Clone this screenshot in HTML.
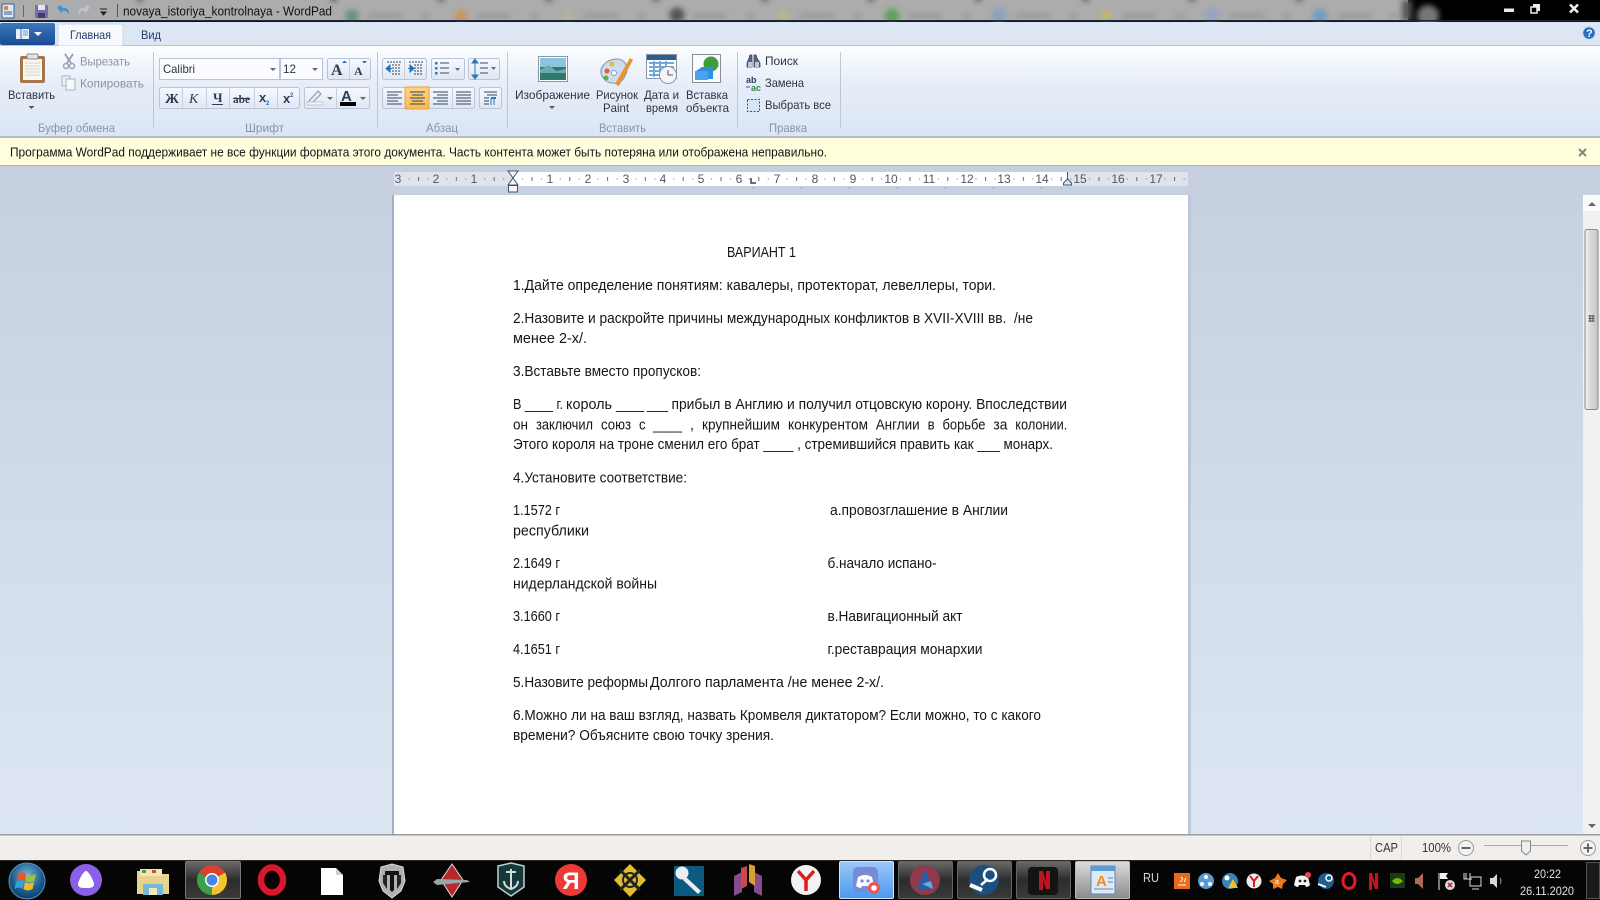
<!DOCTYPE html>
<html lang="ru"><head><meta charset="utf-8"><title>novaya_istoriya_kontrolnaya - WordPad</title>
<style>
html,body{margin:0;padding:0;background:#000;width:1600px;height:900px;overflow:hidden}
svg{display:block;font-family:"Liberation Sans","Noto Sans CJK JP",sans-serif}
.d{font-size:14.6px;fill:#141414}
.u{font-size:12px;fill:#2c3440}
.g{font-size:12px;fill:#8a93a3}
.l{font-size:12px;fill:#8794a8}
.r{font-size:12px;fill:#556}
</style></head><body>
<svg width="1600" height="900" viewBox="0 0 1600 900" xmlns="http://www.w3.org/2000/svg">
<defs>
<linearGradient id="rib" x1="0" y1="0" x2="0" y2="1"><stop offset="0" stop-color="#fbfdff"/><stop offset=".45" stop-color="#e6edf8"/><stop offset="1" stop-color="#dbe5f3"/></linearGradient>
<linearGradient id="work" x1="0" y1="0" x2="0" y2="1"><stop offset="0" stop-color="#c5cfe0"/><stop offset="1" stop-color="#dde6f2"/></linearGradient>
<linearGradient id="app" x1="0" y1="0" x2="0" y2="1"><stop offset="0" stop-color="#3a77bd"/><stop offset="1" stop-color="#1a4b94"/></linearGradient>
<linearGradient id="btn" x1="0" y1="0" x2="0" y2="1"><stop offset="0" stop-color="#f6f9fe"/><stop offset="1" stop-color="#dfe7f3"/></linearGradient>
<linearGradient id="org" x1="0" y1="0" x2="0" y2="1"><stop offset="0" stop-color="#fdd58a"/><stop offset="1" stop-color="#fbb84e"/></linearGradient>
<linearGradient id="thumb" x1="0" y1="0" x2="1" y2="0"><stop offset="0" stop-color="#f2f2f2"/><stop offset=".5" stop-color="#d6d6d6"/><stop offset="1" stop-color="#c4c4c4"/></linearGradient>
<linearGradient id="tb" x1="0" y1="0" x2="0" y2="1"><stop offset="0" stop-color="#6a6a6a"/><stop offset=".5" stop-color="#2c2c2c"/><stop offset="1" stop-color="#3a3a3a"/></linearGradient>
<linearGradient id="disc" x1="0" y1="0" x2="0" y2="1"><stop offset="0" stop-color="#9cc8f8"/><stop offset="1" stop-color="#4c98ee"/></linearGradient>
<linearGradient id="wp" x1="0" y1="0" x2="0" y2="1"><stop offset="0" stop-color="#dcdcdc"/><stop offset="1" stop-color="#8a8a8a"/></linearGradient>
<radialGradient id="orb" cx=".5" cy=".35" r=".7"><stop offset="0" stop-color="#7fb4d8"/><stop offset=".6" stop-color="#1d5d8e"/><stop offset="1" stop-color="#0a3a5c"/></radialGradient>
<filter id="bl" x="-50%" y="-50%" width="200%" height="200%"><feGaussianBlur stdDeviation="3"/></filter>
<filter id="s" x="-5%" y="-5%" width="110%" height="110%"><feGaussianBlur stdDeviation=".25"/></filter>
<pattern id="tick" x="513" y="172" width="37.8" height="14" patternUnits="userSpaceOnUse">
<rect x="9" y="6.5" width="1" height="1" fill="#667"/><rect x="18.5" y="5" width="1" height="4" fill="#667"/><rect x="28" y="6.5" width="1" height="1" fill="#667"/>
</pattern>
</defs>

<!-- title bar -->
<rect width="1600" height="22" fill="#000"/>
<rect x="0" y="0" width="1408" height="21" fill="#acacac"/>
<rect x="1402" y="0" width="10" height="21" fill="#555" filter="url(#bl)"/>
<g filter="url(#bl)" opacity=".72">
<circle cx="140" cy="-2" r="3.500" fill="#333"/><circle cx="334" cy="-2" r="3.500" fill="#333"/><circle cx="441" cy="-2" r="3.500" fill="#333"/><circle cx="549" cy="-2" r="3.500" fill="#333"/><circle cx="656" cy="-2" r="3.500" fill="#333"/><circle cx="765" cy="-2" r="3.500" fill="#333"/><circle cx="871" cy="-2" r="3.500" fill="#333"/><circle cx="978" cy="-2" r="3.500" fill="#333"/><circle cx="1086" cy="-2" r="3.500" fill="#333"/><circle cx="1192" cy="-2" r="3.500" fill="#333"/><circle cx="1299" cy="-2" r="3.500" fill="#333"/>
<circle cx="352" cy="16" r="6.500" fill="#3f8a62"/><circle cx="461" cy="16" r="6.500" fill="#d58a3e"/><circle cx="568" cy="16" r="5" fill="#b9b88a"/><circle cx="677" cy="15" r="7.500" fill="#303030"/><circle cx="783" cy="16" r="5" fill="#c6bc62"/><circle cx="892" cy="16" r="7.500" fill="#3f9a3a"/><circle cx="999" cy="16" r="7.500" fill="#7f9cc8"/><circle cx="1106" cy="16" r="5" fill="#d0be40"/><circle cx="1212" cy="16" r="7.500" fill="#8aa2c8"/><circle cx="1320" cy="16" r="7.500" fill="#5c94c8"/>
<g fill="#8c8c8c"><rect x="368" y="14" width="34" height="4"/><rect x="422" y="14" width="8" height="4"/><rect x="477" y="14" width="34" height="4"/><rect x="530" y="14" width="8" height="4"/><rect x="584" y="14" width="34" height="4"/><rect x="638" y="14" width="8" height="4"/><rect x="693" y="14" width="34" height="4"/><rect x="746" y="14" width="8" height="4"/><rect x="800" y="14" width="34" height="4"/><rect x="854" y="14" width="8" height="4"/><rect x="908" y="14" width="34" height="4"/><rect x="962" y="14" width="8" height="4"/><rect x="1016" y="14" width="34" height="4"/><rect x="1070" y="14" width="8" height="4"/><rect x="1122" y="14" width="34" height="4"/><rect x="1176" y="14" width="8" height="4"/><rect x="1230" y="14" width="34" height="4"/><rect x="1282" y="14" width="8" height="4"/><rect x="1338" y="14" width="34" height="4"/><rect x="1390" y="14" width="8" height="4"/></g>
</g>
<circle cx="1428" cy="16" r="11" fill="#777" filter="url(#bl)"/>
<rect y="20" width="1600" height="1.500" fill="#1f2a38"/>
<!-- qat -->
<g>
<rect x="2" y="4" width="12" height="14" fill="#dce8f5" stroke="#34609a"/><rect x="4" y="6" width="4" height="4" fill="#e2853a"/><path d="M4 12h8M4 14h8" stroke="#34609a"/>
<rect x="23" y="5" width="1" height="12" fill="#666"/>
<rect x="35" y="5" width="13" height="13" fill="#7c6da8" rx="1"/><rect x="38" y="5" width="7" height="5" fill="#e6e4f0"/><rect x="38" y="13" width="7" height="5" fill="#453a70"/>
<path d="M57 7 L62 5 L62 8 C68 7 70 11 68 15 C68 11 65 10 62 11 L62 14Z" fill="#3f93d6"/>
<path d="M90 7 L85 5 L85 8 C79 7 77 11 79 15 C79 11 82 10 85 11 L85 14Z" fill="#b9c4d4"/>
<path d="M100 9h7M101 12h5l-2.500 3z" stroke="#222" fill="#222"/>
<rect x="117" y="4" width="1" height="13" fill="#555"/>
</g>
<text x="123" y="15.500" font-size="12.500" fill="#111" textLength="209" lengthAdjust="spacingAndGlyphs">novaya_istoriya_kontrolnaya - WordPad</text>
<!-- window buttons -->
<rect x="1504" y="8.500" width="10" height="3.500" fill="#e8e8e8"/>
<rect x="1533" y="4" width="7" height="7" fill="#eee"/><rect x="1531" y="7" width="6" height="6" fill="#000" stroke="#eee" stroke-width="1.500"/>
<path d="M1570 4.500l8 8M1578 4.500l-8 8" stroke="#eee" stroke-width="2.600"/>

<!-- tab row -->
<rect y="22" width="1600" height="24" fill="#dde6f3"/>
<rect x="0" y="23" width="55" height="22" rx="2" fill="url(#app)"/>
<rect x="16" y="29" width="13" height="10" fill="#e8eefa"/><path d="M21 29v10" stroke="#3a6fb4"/><path d="M23 31h5M23 33h5M23 35h5" stroke="#7a99c5"/>
<path d="M34 32h8l-4 4z" fill="#fff"/>
<path d="M58 46V26q0-2 2-2h61q2 0 2 2v20z" fill="#f6f9fe" stroke="#cfd7e4"/>
<text x="70" y="39" class="u" textLength="41" lengthAdjust="spacingAndGlyphs" style="fill:#1f3a66">Главная</text>
<text x="141" y="39" class="u" textLength="20" lengthAdjust="spacingAndGlyphs" style="fill:#1f3a66">Вид</text>
<circle cx="1589" cy="33" r="6.500" fill="#2a6cc0" stroke="#cfe0f5" stroke-width="1.500"/><text x="1586" y="37" font-size="11" font-weight="bold" fill="#fff">?</text>

<!-- ribbon -->
<rect y="46" width="1600" height="90" fill="url(#rib)"/>
<rect y="45" width="58" height="1" fill="#b8c2d0"/><rect x="123" y="45" width="1477" height="1" fill="#b8c2d0"/>
<rect y="136" width="1600" height="2" fill="#b3bdd0"/>
<g fill="#bcc7d6"><rect x="153" y="52" width="1" height="76"/><rect x="377" y="52" width="1" height="76"/><rect x="507" y="52" width="1" height="76"/><rect x="737" y="52" width="1" height="76"/><rect x="840" y="52" width="1" height="76"/></g>

<!-- clipboard group -->
<rect x="20" y="56" width="25" height="27" rx="2" fill="#a5764a"/><rect x="23" y="59" width="19" height="21" fill="#fbf7ea"/><path d="M25 63h15M25 66h15M25 69h15M25 72h15M25 75h15" stroke="#cfd4dc"/><rect x="27" y="54" width="11" height="5" rx="1" fill="#dfe3e8" stroke="#889"/>
<text x="8" y="99" class="u" textLength="47" lengthAdjust="spacingAndGlyphs">Вставить</text>
<path d="M28.500 106h6l-3 3z" fill="#556"/>
<path d="M65 54l6 9M73 54l-6 9" stroke="#98a2b0" stroke-width="2" fill="none"/><circle cx="66" cy="66" r="2.500" fill="none" stroke="#98a2b0" stroke-width="1.500"/><circle cx="72" cy="66" r="2.500" fill="none" stroke="#98a2b0" stroke-width="1.500"/>
<text x="80" y="65.500" class="g" textLength="50" lengthAdjust="spacingAndGlyphs">Вырезать</text>
<rect x="62" y="76" width="8" height="10" fill="#eef2f7" stroke="#aab3c0"/><rect x="66" y="79" width="9" height="11" fill="#f5f7fa" stroke="#aab3c0"/>
<text x="80" y="87.500" class="g" textLength="64" lengthAdjust="spacingAndGlyphs">Копировать</text>
<text x="38" y="132" class="l" textLength="77" lengthAdjust="spacingAndGlyphs">Буфер обмена</text>

<!-- font group -->
<rect x="159.500" y="58.500" width="120" height="21" fill="#fafcff" stroke="#b9c4d4"/>
<rect x="280.500" y="58.500" width="42" height="21" fill="#fafcff" stroke="#b9c4d4"/>
<text x="163" y="73" class="u" textLength="32" lengthAdjust="spacingAndGlyphs">Calibri</text>
<text x="283" y="73" class="u" textLength="13" lengthAdjust="spacingAndGlyphs">12</text>
<path d="M270 68h6l-3 3zM312 68h6l-3 3z" fill="#667"/>
<rect x="327.500" y="58.500" width="43" height="21" rx="2" fill="url(#btn)" stroke="#b9c4d4"/><rect x="349" y="59" width="1" height="20" fill="#c6cfdc"/>
<text x="331" y="75" font-family="Liberation Serif" font-weight="bold" font-size="16" fill="#2e3c50">A</text><path d="M342 63l2.500-2.500 2.500 2.500z" fill="#2a66b0"/>
<text x="354" y="75" font-family="Liberation Serif" font-weight="bold" font-size="12" fill="#2e3c50">A</text><path d="M362 61h5l-2.500 2.500z" fill="#2a66b0"/>
<rect x="159.500" y="87.500" width="140" height="21" rx="2" fill="url(#btn)" stroke="#b9c4d4"/>
<g fill="#c6cfdc"><rect x="182" y="88" width="1" height="20"/><rect x="206" y="88" width="1" height="20"/><rect x="229" y="88" width="1" height="20"/><rect x="254" y="88" width="1" height="20"/><rect x="277" y="88" width="1" height="20"/></g>
<text x="165" y="103" font-family="Liberation Serif" font-weight="bold" font-size="14" fill="#2e3c50">Ж</text>
<text x="189" y="103" font-family="Liberation Serif" font-style="italic" font-size="14" fill="#2e3c50">К</text>
<text x="213" y="102" font-family="Liberation Serif" font-size="13" font-weight="bold" fill="#2e3c50">Ч</text><rect x="212" y="104" width="11" height="1" fill="#2e3c50"/>
<text x="233" y="103" font-family="Liberation Serif" font-size="12" font-weight="bold" fill="#2e3c50" textLength="17" lengthAdjust="spacingAndGlyphs">abe</text><rect x="233" y="98" width="17" height="1" fill="#2e3c50"/>
<text x="259" y="102" font-size="13" font-weight="bold" fill="#2e3c50">x</text><text x="266" y="105" font-size="6" font-weight="bold" fill="#2a66b0">2</text>
<text x="283" y="103" font-size="13" font-weight="bold" fill="#2e3c50">x</text><text x="290" y="97" font-size="6" font-weight="bold" fill="#2a66b0">2</text>
<rect x="304.500" y="87.500" width="65" height="21" rx="2" fill="url(#btn)" stroke="#b9c4d4"/><rect x="336" y="88" width="1" height="20" fill="#c6cfdc"/>
<path d="M309 101l9-10 3 3-9 9h-3z" fill="#e6ecf4" stroke="#8b95a5"/><rect x="307" y="102" width="16" height="3" fill="#f2f4f7" stroke="#b0b8c4" stroke-width=".7"/>
<path d="M327 97h6l-3 3zM360 97h6l-3 3z" fill="#667"/>
<text x="341" y="101" font-family="Liberation Sans" font-weight="bold" font-size="15" fill="#28405f">A</text><rect x="340" y="102" width="16" height="4" fill="#000"/>
<text x="245" y="132" class="l" textLength="39" lengthAdjust="spacingAndGlyphs">Шрифт</text>

<!-- paragraph group -->
<rect x="382.500" y="58.500" width="44" height="21" rx="2" fill="url(#btn)" stroke="#b9c4d4"/><rect x="404" y="59" width="1" height="20" fill="#c6cfdc"/>
<path d="M392 65h9M392 68h9M392 71h9M392 74h9M387 62h14" stroke="#30465f" stroke-dasharray="2 1"/><path d="M387 68.500h5M386 68.500l4-3.500v7z" fill="#1f74c0" stroke="#1f74c0"/>
<path d="M414 65h9M414 68h9M414 71h9M414 74h9M409 62h14" stroke="#30465f" stroke-dasharray="2 1"/><path d="M408 68.500h5M414 68.500l-4-3.500v7z" fill="#1f74c0" stroke="#1f74c0"/>
<rect x="431.500" y="58.500" width="33" height="21" rx="2" fill="url(#btn)" stroke="#b9c4d4"/><rect x="435" y="62" width="2.500" height="2.500" fill="#2a7ac0"/><rect x="435" y="67" width="2.500" height="2.500" fill="#2a7ac0"/><rect x="435" y="72" width="2.500" height="2.500" fill="#2a7ac0"/><path d="M440 63h9M440 68h9M440 73h9" stroke="#445"/><path d="M455 68h5l-2.500 3z" fill="#667"/>
<rect x="468.500" y="58.500" width="31" height="21" rx="2" fill="url(#btn)" stroke="#b9c4d4"/><path d="M475 59l3 4h-6zM475 79l3-4h-6zM475 63v12" fill="#2a7ac0" stroke="#2a7ac0"/><path d="M480 63h8M480 68h8M480 73h8" stroke="#445"/><path d="M491 67h5l-2.500 3z" fill="#667"/>
<rect x="382.500" y="87.500" width="92" height="21" rx="2" fill="url(#btn)" stroke="#b9c4d4"/>
<rect x="405" y="87" width="24" height="22" rx="1" fill="url(#org)" stroke="#e5a33c"/>
<rect x="452" y="88" width="1" height="20" fill="#c6cfdc"/><rect x="429" y="88" width="1" height="20" fill="#c6cfdc"/>
<path d="M387 92h15M387 95h11M387 98h15M387 101h11M387 104h15" stroke="#30465f"/>
<path d="M410 92h15M412 95h11M410 98h15M412 101h11M410 104h15" stroke="#30465f"/>
<path d="M433 92h15M437 95h11M433 98h15M437 101h11M433 104h15" stroke="#30465f"/>
<path d="M456 92h15M456 95h15M456 98h15M456 101h15M456 104h15" stroke="#30465f"/>
<rect x="479.500" y="87.500" width="22" height="21" rx="2" fill="url(#btn)" stroke="#b9c4d4"/><path d="M484 92h13M487 95h10M484 98h5M484 101h5M484 104h5" stroke="#30465f"/><path d="M491 98v7M494 98v7" stroke="#2a7ac0"/><path d="M491 98h5" stroke="#2a7ac0" stroke-width="2"/>
<text x="426" y="132" class="l" textLength="32" lengthAdjust="spacingAndGlyphs">Абзац</text>

<!-- insert group -->
<rect x="538.500" y="56.500" width="29" height="25" fill="#fff" stroke="#8a96a6"/><rect x="540" y="58" width="26" height="9" fill="#8cc4e0"/><rect x="540" y="67" width="26" height="13" fill="#2f7a6a"/><path d="M540 70l9-5 7 6 10-2v4h-26z" fill="#6caab0"/>
<text x="515" y="99" class="u" textLength="75" lengthAdjust="spacingAndGlyphs">Изображение</text><path d="M549 106h6l-3 3z" fill="#556"/>
<path d="M602 76c-4-8 4-17 15-17 8 0 12 8 9 15-2 5-5 10-13 9-5 0-9-3-11-7z" fill="#cfdcec" stroke="#8294aa"/><circle cx="607" cy="71" r="2.500" fill="#e65a3a"/><circle cx="612" cy="64" r="2.500" fill="#e4c03a"/><circle cx="606" cy="78" r="2.500" fill="#5bb04a"/><circle cx="614" cy="73" r="2.500" fill="#fff" stroke="#7aa0c8"/>
<path d="M615 84l15-26 3 2-14 26z" fill="#e89438"/>
<text x="596" y="99" class="u" textLength="42" lengthAdjust="spacingAndGlyphs">Рисунок</text><text x="603" y="112" class="u" textLength="26" lengthAdjust="spacingAndGlyphs">Paint</text>
<rect x="646.500" y="54.500" width="30" height="24" fill="#fff" stroke="#8a96a6"/><rect x="647" y="55" width="29" height="5" fill="#2e5c8c"/><path d="M649 63h25M649 67h25M649 71h25M649 75h25M654 61v16M660 61v16M666 61v16" stroke="#70aadc" stroke-width="2"/><circle cx="668" cy="75" r="8.500" fill="#f4f6f8" stroke="#8a96a6"/><path d="M668 70v5h5" stroke="#556" fill="none"/>
<text x="644" y="99" class="u" textLength="35" lengthAdjust="spacingAndGlyphs">Дата и</text><text x="646" y="112" class="u" textLength="32" lengthAdjust="spacingAndGlyphs">время</text>
<rect x="692.500" y="54.500" width="28" height="28" fill="#fbfbfb" stroke="#8a8f96"/><circle cx="711" cy="64" r="7.500" fill="#3e9c3e"/><path d="M696 71l6-4h11v12h-17z" fill="#2f8fe0"/><rect x="695" y="71" width="13" height="9" fill="#4ba2ea"/>
<text x="686" y="99" class="u" textLength="42" lengthAdjust="spacingAndGlyphs">Вставка</text><text x="686" y="112" class="u" textLength="43" lengthAdjust="spacingAndGlyphs">объекта</text>
<text x="599" y="132" class="l" textLength="47" lengthAdjust="spacingAndGlyphs">Вставить</text>

<!-- edit group -->
<path d="M747 67v-4l2-5 1-3h2l0 12zM754 67l0-12h2l1 3 3 5v4z" fill="#5a6a82" stroke="#2b3a52" stroke-width=".7"/><rect x="748" y="62" width="4" height="5" fill="#b9c8dc"/><rect x="755" y="62" width="4" height="5" fill="#b9c8dc"/>
<text x="765" y="65" class="u" textLength="33" lengthAdjust="spacingAndGlyphs">Поиск</text>
<text x="746" y="83" font-size="9" font-weight="bold" fill="#30405a">ab</text><text x="751" y="91" font-size="9" font-weight="bold" fill="#2b8a4a">ac</text><path d="M746 87h4" stroke="#2a66b0"/>
<text x="765" y="87" class="u" textLength="39" lengthAdjust="spacingAndGlyphs">Замена</text>
<rect x="747.500" y="99.500" width="12" height="12" fill="#d6e6f6"/><rect x="747.500" y="99.500" width="12" height="12" fill="none" stroke="#1f5c96" stroke-dasharray="2 1.500"/>
<text x="765" y="109" class="u" textLength="66" lengthAdjust="spacingAndGlyphs">Выбрать все</text>
<text x="769" y="132" class="l" textLength="38" lengthAdjust="spacingAndGlyphs">Правка</text>

<!-- notification -->
<rect y="138" width="1600" height="27" fill="#ffffdd"/>
<rect y="165" width="1600" height="1" fill="#b3b3aa"/>
<text x="10" y="156.500" font-size="12.500" fill="#151515" textLength="817" lengthAdjust="spacingAndGlyphs">Программа WordPad поддерживает не все функции формата этого документа. Часть контента может быть потеряна или отображена неправильно.</text>
<path d="M1579 149l7 7M1586 149l-7 7" stroke="#858585" stroke-width="2"/>

<!-- work area -->
<rect y="166" width="1600" height="668" fill="url(#work)"/>

<!-- ruler -->
<rect x="394" y="172" width="794" height="14" fill="#dfe4ec"/>
<rect x="513" y="172" width="554" height="14" fill="#fff"/>
<rect x="394" y="172" width="794" height="14" fill="url(#tick)"/>
<g class="r" font-size="12" text-anchor="middle" fill="#505864">
<text x="398" y="183">3</text><text x="436" y="183">2</text><text x="474" y="183">1</text><text x="550" y="183">1</text><text x="588" y="183">2</text><text x="626" y="183">3</text><text x="663" y="183">4</text><text x="701" y="183">5</text><text x="739" y="183">6</text><text x="777" y="183">7</text><text x="815" y="183">8</text><text x="853" y="183">9</text><text x="891" y="183">10</text><text x="929" y="183">11</text><text x="967" y="183">12</text><text x="1004" y="183">13</text><text x="1042" y="183">14</text><text x="1080" y="183">15</text><text x="1118" y="183">16</text><text x="1156" y="183">17</text>
</g>
<path d="M508 171h10l-5 7zM513 178l5 7h-10z" fill="#f4f6fa" stroke="#3e5570"/><rect x="508.500" y="185.500" width="9" height="6.500" fill="#f4f6fa" stroke="#3e5570"/>
<path d="M1067.500 172v7" stroke="#3e5570"/><path d="M1067.500 179l4 4v2h-8v-2z" fill="#dfe6f0" stroke="#3e5570"/>
<path d="M751 178v5h5" stroke="#2c4260" stroke-width="1.500" fill="none"/>
<g fill="#9ba3b0"><rect x="753" y="187" width="1" height="2"/><rect x="801" y="187" width="1" height="2"/><rect x="849" y="187" width="1" height="2"/><rect x="897" y="187" width="1" height="2"/><rect x="945" y="187" width="1" height="2"/><rect x="993" y="187" width="1" height="2"/><rect x="1041" y="187" width="1" height="2"/></g>

<!-- page -->
<rect x="392" y="195" width="2" height="639" fill="#a3afc2"/>
<rect x="1188" y="195" width="3" height="639" fill="#bcc7d8"/>
<rect x="394" y="195" width="794" height="639" fill="#fff"/>

<g class="d" filter="url(#s)">
<text class="d" x="727" y="257" textLength="69" lengthAdjust="spacingAndGlyphs">ВАРИАНТ 1</text>
<text class="d" x="513" y="290" textLength="483" lengthAdjust="spacingAndGlyphs">1.Дайте определение понятиям: кавалеры, протекторат, левеллеры, тори.</text>
<text class="d" x="513" y="323" textLength="520" lengthAdjust="spacingAndGlyphs" xml:space="preserve">2.Назовите и раскройте причины международных конфликтов в XVII-XVIII вв.  /не</text>
<text class="d" x="513" y="343" textLength="74" lengthAdjust="spacingAndGlyphs">менее 2-х/.</text>
<text class="d" x="513" y="376" textLength="188" lengthAdjust="spacingAndGlyphs">3.Вставьте вместо пропусков:</text>
<text class="d" x="513" y="409" textLength="50" lengthAdjust="spacingAndGlyphs">В ____ г.</text>
<text class="d" x="566" y="409" textLength="46" lengthAdjust="spacingAndGlyphs">король</text>
<text class="d" x="616" y="409" textLength="28" lengthAdjust="spacingAndGlyphs">____</text>
<text class="d" x="647" y="409" textLength="21" lengthAdjust="spacingAndGlyphs">___</text>
<text class="d" x="671.500" y="409" textLength="395.500" lengthAdjust="spacingAndGlyphs">прибыл в Англию и получил отцовскую корону. Впоследствии</text>
<text class="d" x="513" y="429.500" textLength="15" lengthAdjust="spacingAndGlyphs">он</text>
<text class="d" x="536" y="429.500" textLength="57" lengthAdjust="spacingAndGlyphs">заключил</text>
<text class="d" x="601" y="429.500" textLength="30" lengthAdjust="spacingAndGlyphs">союз</text>
<text class="d" x="639" y="429.500" textLength="6.500" lengthAdjust="spacingAndGlyphs">с</text>
<text class="d" x="653" y="429.500" textLength="29" lengthAdjust="spacingAndGlyphs">____</text>
<text class="d" x="690" y="429.500" textLength="4" lengthAdjust="spacingAndGlyphs">,</text>
<text class="d" x="702" y="429.500" textLength="78" lengthAdjust="spacingAndGlyphs">крупнейшим</text>
<text class="d" x="788" y="429.500" textLength="80" lengthAdjust="spacingAndGlyphs">конкурентом</text>
<text class="d" x="875.700" y="429.500" textLength="44" lengthAdjust="spacingAndGlyphs">Англии</text>
<text class="d" x="927.600" y="429.500" textLength="7" lengthAdjust="spacingAndGlyphs">в</text>
<text class="d" x="942.500" y="429.500" textLength="43" lengthAdjust="spacingAndGlyphs">борьбе</text>
<text class="d" x="993.400" y="429.500" textLength="14" lengthAdjust="spacingAndGlyphs">за</text>
<text class="d" x="1015.300" y="429.500" textLength="52" lengthAdjust="spacingAndGlyphs">колонии.</text>
<text class="d" x="513" y="449" textLength="540" lengthAdjust="spacingAndGlyphs">Этого короля на троне сменил его брат ____ , стремившийся править как ___ монарх.</text>
<text class="d" x="513" y="482.500" textLength="174" lengthAdjust="spacingAndGlyphs">4.Установите соответствие:</text>
<text class="d" x="513" y="515" textLength="47" lengthAdjust="spacingAndGlyphs">1.1572 г</text>
<text class="d" x="830" y="515" textLength="178" lengthAdjust="spacingAndGlyphs">а.провозглашение в Англии</text>
<text class="d" x="513" y="535.500" textLength="76" lengthAdjust="spacingAndGlyphs">республики</text>
<text class="d" x="513" y="568" textLength="47" lengthAdjust="spacingAndGlyphs">2.1649 г</text>
<text class="d" x="827.500" y="568" textLength="109" lengthAdjust="spacingAndGlyphs">б.начало испано-</text>
<text class="d" x="513" y="588.500" textLength="144" lengthAdjust="spacingAndGlyphs">нидерландской войны</text>
<text class="d" x="513" y="621" textLength="47" lengthAdjust="spacingAndGlyphs">3.1660 г</text>
<text class="d" x="827.500" y="621" textLength="135" lengthAdjust="spacingAndGlyphs">в.Навигационный акт</text>
<text class="d" x="513" y="654" textLength="47" lengthAdjust="spacingAndGlyphs">4.1651 г</text>
<text class="d" x="827.500" y="654" textLength="155" lengthAdjust="spacingAndGlyphs">г.реставрация монархии</text>
<text class="d" x="513" y="687" textLength="135" lengthAdjust="spacingAndGlyphs">5.Назовите реформы</text>
<text class="d" x="650" y="687" textLength="234" lengthAdjust="spacingAndGlyphs">Долгого парламента /не менее 2-х/.</text>
<text class="d" x="513" y="720" textLength="528" lengthAdjust="spacingAndGlyphs">6.Можно ли на ваш взгляд, назвать Кромвеля диктатором? Если можно, то с какого</text>
<text class="d" x="513" y="740" textLength="261" lengthAdjust="spacingAndGlyphs">времени? Объясните свою точку зрения.</text>
</g>

<!-- scrollbar -->
<rect x="1583" y="195" width="17" height="639" fill="#f1f1f1"/>
<rect x="1583" y="195" width="17" height="16" fill="#fbfbfb"/>
<path d="M1588 206l4-4 4 4z" fill="#666"/>
<rect x="1585" y="229.500" width="13" height="180" rx="2" fill="url(#thumb)" stroke="#8c8c8c"/>
<path d="M1588.500 316h6M1588.500 318.500h6M1588.500 321h6M1590 315v7M1593 315v7" stroke="#555"/>
<path d="M1588 824l4 4 4-4z" fill="#666"/>

<!-- status bar -->
<rect y="834" width="1600" height="1.500" fill="#9c9c9c"/>
<rect y="835.500" width="1600" height="25" fill="#f1eeec"/>
<rect x="1370" y="836" width="1" height="24" fill="#dcd9d6"/><rect x="1401" y="836" width="1" height="24" fill="#dcd9d6"/>
<text x="1375" y="852" font-size="13" fill="#333" textLength="23" lengthAdjust="spacingAndGlyphs">CAP</text>
<text x="1422" y="852" font-size="13" fill="#333" textLength="29" lengthAdjust="spacingAndGlyphs">100%</text>
<circle cx="1466" cy="848" r="7.500" fill="#f3f3f3" stroke="#9a9a9a"/><rect x="1461.500" y="847" width="9" height="2" fill="#666"/>
<rect x="1484" y="845" width="84" height="1" fill="#aaa"/>
<path d="M1521.500 841h9v10l-4.500 4-4.500-4z" fill="#eee" stroke="#888"/>
<circle cx="1588" cy="848" r="7.500" fill="#f3f3f3" stroke="#9a9a9a"/><path d="M1583.500 848h9M1588 843.500v9" stroke="#666" stroke-width="2"/>

<!-- taskbar -->
<rect y="860" width="1600" height="40" fill="#050505"/>
<rect y="860" width="1600" height="1" fill="#2a2a2a"/>
<circle cx="27" cy="881" r="18" fill="url(#orb)" stroke="#5a93b8"/>
<path d="M18 874q5-3 8 0l-1.500 7q-4-3-8 0z" fill="#e8562a"/><path d="M27 874q4 3 9 0l-1.500 7q-5 3-9 0z" fill="#9ac43a"/><path d="M16 882q4-3 8 0l-1.500 7q-4-3-8 0z" fill="#3aa0dc"/><path d="M25 882q4 3 9 0l-1.500 7q-5 3-9 0z" fill="#f0bc2a"/>
<circle cx="86" cy="880" r="16" fill="#8a60e6"/><path d="M86 871c-3 0-8 11-8 13 0 4 4 4 8 4s8 0 8-4c0-2-5-13-8-13z" fill="#fff"/>
<path d="M137 871h14l3 3h15v20h-32z" fill="#e8d38a"/><rect x="140" y="869" width="22" height="7" fill="#f2e6b8"/><rect x="142" y="870" width="4" height="3" fill="#4a9a4a"/><rect x="152" y="870" width="4" height="3" fill="#b8582a"/><rect x="143" y="884" width="20" height="11" fill="#76b8d8"/><rect x="149" y="888" width="8" height="7" fill="#f0e6c0"/>
<rect x="185.500" y="861.500" width="55" height="37" rx="1.500" fill="url(#tb)" stroke="#777"/>
<path d="M212 880L199 872.500A15 15 0 0 1 225 872.500Z" fill="#d9402f"/><path d="M212 880L225 872.500A15 15 0 0 1 212 895Z" fill="#f4c430"/><path d="M212 880L212 895A15 15 0 0 1 199 872.500Z" fill="#3f9e4a"/><circle cx="212" cy="880" r="7" fill="#fff"/><circle cx="212" cy="880" r="5.500" fill="#4a86e8"/>
<ellipse cx="272" cy="880" rx="11" ry="12.500" fill="none" stroke="#d8172a" stroke-width="6.500"/>
<path d="M321 868h15l7 7v20h-22z" fill="#fff"/><path d="M336 868v7h7z" fill="#cfcfcf"/>
<path d="M381 867l11-3 11 3 2 14-4 10-9 7-9-7-4-10z" fill="#b0b0b0" stroke="#ddd"/><path d="M385 871h14v4h-5v15l-2 2-2-2v-15h-5z" fill="#111"/><path d="M383 875v8l4 6v-14zM401 875v8l-4 6v-14z" fill="#222"/>
<path d="M452 864l11 16-11 17-11-17z" fill="#b5282e" stroke="#ddd"/><path d="M437 879l30 1 3 2-33 3-4-3z" fill="#9aa6a6"/>
<path d="M498 866l13-3 13 3v21l-13 9-13-9z" fill="#16383a" stroke="#b9d4d0" stroke-width="1.500"/><path d="M511 869v20M506 872h10M504 881c0 5 4 7 7 8 3-1 7-3 7-8" stroke="#cfe0dc" stroke-width="2" fill="none"/>
<circle cx="571" cy="880" r="16" fill="#ec3a37"/><text x="571" y="889" font-size="24" font-weight="bold" fill="#fff" text-anchor="middle">Я</text>
<path d="M630 864l16 16-16 17-16-17z" fill="#e0bc30"/><path d="M620 870l20 20M640 870l-20 20" stroke="#222" stroke-width="3"/><circle cx="630" cy="880" r="7" fill="none" stroke="#222" stroke-width="2"/>
<rect x="674" y="866" width="30" height="30" fill="#0d5a80"/><circle cx="682" cy="873" r="6.500" fill="#e8eef2"/><path d="M686 877l15 14-3 3-15-14z" fill="#e8eef2"/>
<path d="M734 876l8-4v20l-8 4zM762 876l-8-4v20l8 4z" fill="#8a4a90"/><path d="M741 868l6-2v20l-6 3z" fill="#c84a4a"/><path d="M749 864l6 2v20l-6-4z" fill="#d8a030"/>
<circle cx="806" cy="880" r="15" fill="#f2f2f2"/><path d="M798 871l8 9 8-9M806 880v11" stroke="#d82020" stroke-width="3.500" fill="none"/>
<rect x="839.500" y="861.500" width="54" height="37" rx="1.500" fill="url(#disc)" stroke="#cfe4fb"/>
<rect x="853" y="867" width="25" height="25" rx="5" fill="#7a8ad8"/><path d="M858 877q7-4 14 0l2 9q-3 2-5 2l-1-2h-6l-1 2q-2 0-5-2z" fill="#fff"/><circle cx="862" cy="881" r="1.600" fill="#7a8ad8"/><circle cx="868" cy="881" r="1.600" fill="#7a8ad8"/><circle cx="874" cy="888" r="6" fill="#e55"/><circle cx="874" cy="888" r="2.800" fill="#fff"/>
<rect x="898.500" y="861.500" width="54" height="37" rx="1.500" fill="url(#tb)" stroke="#666"/><circle cx="925" cy="880" r="15" fill="#8e3a4a"/><path d="M925 869l8 20h-16z" fill="#2a5ca8"/><path d="M922 884l9-3 2 8z" fill="#6aa8e0"/>
<rect x="957.500" y="861.500" width="54" height="37" rx="1.500" fill="url(#tb)" stroke="#666"/><circle cx="984" cy="880" r="15" fill="#1a4f80"/><circle cx="990" cy="875" r="6" fill="none" stroke="#fff" stroke-width="2.500"/><path d="M970 885l12 5" stroke="#fff" stroke-width="4"/><path d="M981 885l7-6" stroke="#fff" stroke-width="2.500"/>
<rect x="1016.500" y="861.500" width="54" height="37" rx="1.500" fill="url(#tb)" stroke="#666"/><rect x="1028" y="867" width="30" height="28" rx="4" fill="#141414"/><path d="M1039 871h4l3 11v-11h4v18h-4l-3-10v11h-4z" fill="#c01520"/>
<rect x="1075.500" y="861.500" width="54" height="37" rx="1.500" fill="url(#wp)" stroke="#bbb"/><rect x="1091" y="866" width="24" height="28" fill="#dfe8f4" stroke="#5a88b8"/><rect x="1091" y="866" width="24" height="5" fill="#5a9ad8"/><text x="1096" y="886" font-size="15" font-weight="bold" fill="#e8902a">A</text><path d="M1108 878h5M1108 882h5M1094 889h19" stroke="#5a88b8"/>

<!-- tray -->
<text x="1143" y="882" font-size="13" fill="#d6d6d6" textLength="16" lengthAdjust="spacingAndGlyphs">RU</text>
<rect x="1174" y="873" width="16" height="16" fill="#e86a1a"/><path d="M1178 885h8M1180 882q4-3 1-5M1184 882q2-2 1-4" stroke="#fff" fill="none"/>
<circle cx="1206" cy="881" r="8" fill="#5a9ad0"/><circle cx="1206" cy="877" r="2" fill="#fff"/><circle cx="1202" cy="884" r="2" fill="#fff"/><circle cx="1210" cy="884" r="2" fill="#fff"/>
<circle cx="1230" cy="881" r="8" fill="#3a82b8"/><path d="M1233 879l5 9h-10z" fill="#f0c020"/><circle cx="1227" cy="878" r="2.500" fill="#fff"/>
<circle cx="1254" cy="881" r="7.500" fill="#eee"/><path d="M1250 876l4 5 4-5M1254 881v6" stroke="#d02020" stroke-width="2" fill="none"/>
<path d="M1278 873l3 5 6 2-4 4-1 5-4-2-5 2 0-5-4-3 6-3z" fill="#ea7a1c"/><text x="1275" y="884" font-size="7" fill="#fff">a</text>
<path d="M1296 877q6-3 12 0l2 8q-2 2-4 2l-1-2h-6l-1 2q-2 0-4-2z" fill="#f4f4f4"/><circle cx="1300" cy="881" r="1.400" fill="#222"/><circle cx="1305" cy="881" r="1.400" fill="#222"/><circle cx="1308" cy="875" r="3" fill="#e44"/>
<circle cx="1326" cy="881" r="8" fill="#1f5d92"/><circle cx="1329" cy="878" r="3" fill="none" stroke="#fff" stroke-width="1.500"/><path d="M1318 884l8 3" stroke="#fff" stroke-width="2"/>
<ellipse cx="1349" cy="881" rx="6" ry="7.500" fill="none" stroke="#e01c28" stroke-width="3"/>
<path d="M1369 873h3l3 10v-10h3v16h-3l-3-9v10h-3z" fill="#c8141e"/>
<rect x="1390" y="873" width="15" height="15" fill="#1a3a1a"/><path d="M1392 881q5-6 11 0q-6 6-11 0z" fill="#76b900"/>
<path d="M1415 878h3l5-5v16l-5-5h-3z" fill="#b06a5a"/>
<path d="M1439 873v17" stroke="#eee"/><path d="M1440 873h8l-2 3 2 3h-8z" fill="#eee"/><circle cx="1450" cy="885" r="5" fill="#d8d8d8"/><path d="M1448 883l4 4M1452 883l-4 4" stroke="#d01818" stroke-width="1.500"/>
<path d="M1466 873v6h-2v-6M1470 873v6M1464 879h8" stroke="#ddd" fill="none"/><rect x="1470" y="877" width="11" height="9" fill="none" stroke="#ddd"/><path d="M1472 889h7" stroke="#ddd"/>
<path d="M1490 878h3l4-4v14l-4-4h-3z" fill="#d8d8d8"/><path d="M1500 878q2 3 0 6" stroke="#999" fill="none"/>
<text x="1534" y="878" font-size="12" fill="#e2e2e2" textLength="27" lengthAdjust="spacingAndGlyphs">20:22</text>
<text x="1520" y="895" font-size="12" fill="#e2e2e2" textLength="54" lengthAdjust="spacingAndGlyphs">26.11.2020</text>
<rect x="1586.500" y="862.500" width="13" height="36" fill="#1a1a1a" stroke="#555"/>
</svg>
</body></html>
